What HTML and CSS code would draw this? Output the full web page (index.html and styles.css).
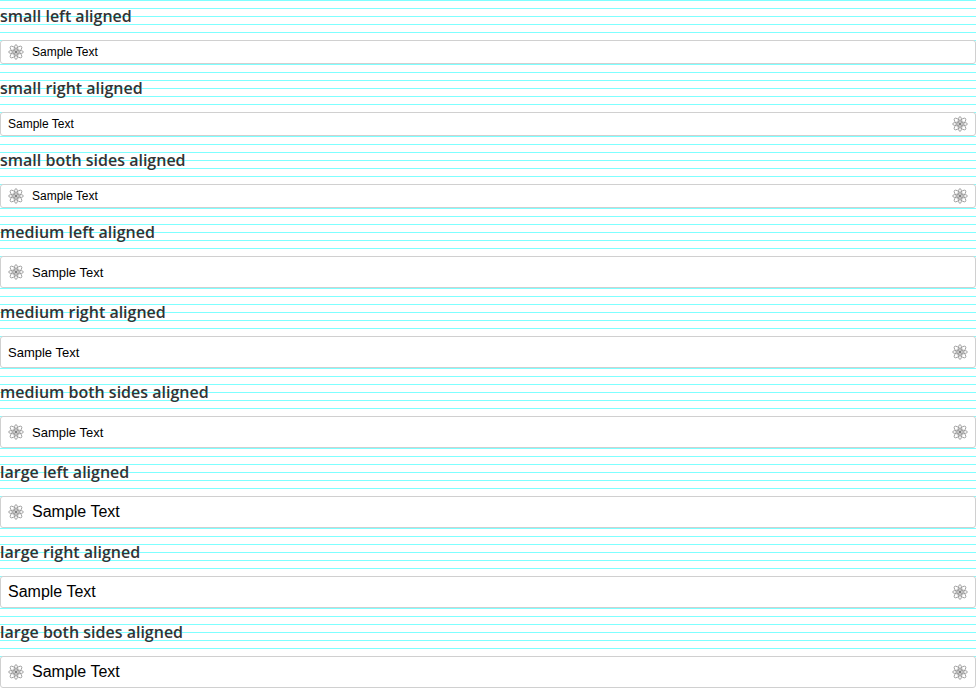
FILE: index.html
```html
<!DOCTYPE html>
<html lang="en">
<head>
<meta charset="utf-8">
<title>Input icons</title>
<link rel="stylesheet" href="styles.css">
</head>
<body>
<svg class="sprite" aria-hidden="true">
  <symbol id="atom" viewBox="0 0 16 16">
    <g fill="none" stroke="#999" stroke-width="0.9">
      <ellipse cx="8" cy="8" rx="7.500" ry="2"/>
      <ellipse cx="8" cy="8" rx="2" ry="7.500"/>
      <ellipse cx="8" cy="8" rx="7.800" ry="2.700" transform="rotate(45 8 8)"/>
      <ellipse cx="8" cy="8" rx="7.800" ry="2.700" transform="rotate(-45 8 8)"/>
    </g>
    <circle cx="8" cy="8" r="1.200" fill="#808080"/>
  </symbol>
</svg>
<main>
  <section class="group">
    <label class="title" for="sl">small left aligned</label>
    <div class="field small"><svg class="icon"><use href="#atom"/></svg><input id="sl" type="text" value="Sample Text"></div>
  </section>
  <section class="group">
    <label class="title" for="sr">small right aligned</label>
    <div class="field small"><input id="sr" type="text" value="Sample Text"><svg class="icon"><use href="#atom"/></svg></div>
  </section>
  <section class="group">
    <label class="title" for="sb">small both sides aligned</label>
    <div class="field small"><svg class="icon"><use href="#atom"/></svg><input id="sb" type="text" value="Sample Text"><svg class="icon"><use href="#atom"/></svg></div>
  </section>
  <section class="group">
    <label class="title" for="ml">medium left aligned</label>
    <div class="field medium"><svg class="icon"><use href="#atom"/></svg><input id="ml" type="text" value="Sample Text"></div>
  </section>
  <section class="group">
    <label class="title" for="mr">medium right aligned</label>
    <div class="field medium"><input id="mr" type="text" value="Sample Text"><svg class="icon"><use href="#atom"/></svg></div>
  </section>
  <section class="group">
    <label class="title" for="mb">medium both sides aligned</label>
    <div class="field medium"><svg class="icon"><use href="#atom"/></svg><input id="mb" type="text" value="Sample Text"><svg class="icon"><use href="#atom"/></svg></div>
  </section>
  <section class="group">
    <label class="title" for="ll">large left aligned</label>
    <div class="field large"><svg class="icon"><use href="#atom"/></svg><input id="ll" type="text" value="Sample Text"></div>
  </section>
  <section class="group">
    <label class="title" for="lr">large right aligned</label>
    <div class="field large"><input id="lr" type="text" value="Sample Text"><svg class="icon"><use href="#atom"/></svg></div>
  </section>
  <section class="group">
    <label class="title" for="lb">large both sides aligned</label>
    <div class="field large"><svg class="icon"><use href="#atom"/></svg><input id="lb" type="text" value="Sample Text"><svg class="icon"><use href="#atom"/></svg></div>
  </section>
</main>
</body>
</html>
```
FILE: styles.css
```css
* { box-sizing: border-box; }

body {
  margin: 0;
  color: #333;
  font-family: "Open Sans", sans-serif;
  /* 8px baseline grid */
  background: #fff linear-gradient(#7fffff 1px, transparent 1px) 0 0 / 100% 8px;
}

.sprite { display: none; }

main {
  display: flex;
  flex-direction: column;
  gap: 8px;
}

.title {
  display: block;
  margin-bottom: 8px;
  font-size: 16px;
  font-weight: 600;
  line-height: 32px;
}

.field {
  display: flex;
  align-items: center;
  gap: 8px;
  height: 32px;
  padding: 0 7px;
  border: 1px solid #d0d0d0;
  border-radius: 3px;
  background: #fff;
}

.field input {
  flex: 1;
  min-width: 0;
  height: 100%;
  padding: 0;
  border: 0;
  outline: 0;
  background: transparent;
  color: #000;
  font-family: "Liberation Sans", Arial, sans-serif;
  font-size: inherit;
}

.icon {
  flex: none;
  width: 16px;
  height: 16px;
}

.small { height: 24px; font-size: 12px; }
.medium { font-size: 13px; }
.large { font-size: 16px; }
```
